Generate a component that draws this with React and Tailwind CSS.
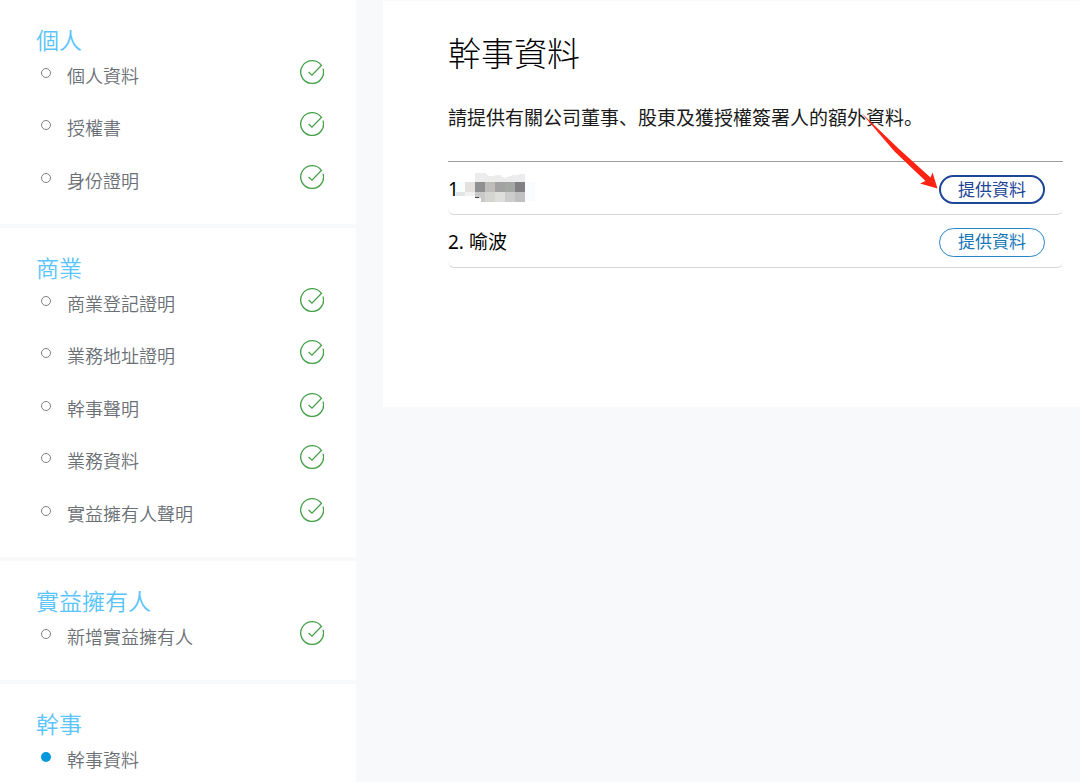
import React from "react";

const sections = [
  {
    title: "個人",
    items: [
      { label: "個人資料", done: true },
      { label: "授權書", done: true },
      { label: "身份證明", done: true },
    ],
  },
  {
    title: "商業",
    items: [
      { label: "商業登記證明", done: true },
      { label: "業務地址證明", done: true },
      { label: "幹事聲明", done: true },
      { label: "業務資料", done: true },
      { label: "實益擁有人聲明", done: true },
    ],
  },
  {
    title: "實益擁有人",
    items: [{ label: "新增實益擁有人", done: true }],
  },
  {
    title: "幹事",
    items: [{ label: "幹事資料", active: true }],
  },
];

function CheckIcon() {
  return (
    <svg viewBox="0 0 24 24" className="h-6 w-6 shrink-0" fill="none" stroke="#43a047" strokeWidth="1.3">
      <path d="M23 8.6A11.4 11.4 0 1 1 21.4 5.4L12 15.2L8.6 12" />
    </svg>
  );
}

// blurred-out name
function Mosaic() {
  return (
    <svg viewBox="0 0 80 30" className="mb-0.5 -ml-1 h-[30px] w-20" shapeRendering="crispEdges">
      <path d="M20 0H30L34 3L45 2L50 5L58 2L70 1V10H20Z" fill="#ececec" />
      <rect x="1" y="9" width="10" height="10" fill="#f8fdff" />
      <rect x="1" y="19" width="9" height="4" fill="#e0e4e6" />
      <rect x="10" y="9" width="10" height="10" fill="#e2e1de" />
      <rect x="10" y="19" width="10" height="4" fill="#f1f1ef" />
      <rect x="20" y="9" width="10" height="10" fill="#8e9092" />
      <rect x="30" y="9" width="10" height="10" fill="#bfbdb9" />
      <rect x="40" y="9" width="10" height="10" fill="#a2a2a3" />
      <rect x="50" y="9" width="10" height="10" fill="#a5a7a5" />
      <rect x="60" y="9" width="10" height="10" fill="#817e84" />
      <path d="M20 19H30V29H26V25H20Z" fill="#c9c9c9" />
      <rect x="20" y="24" width="4" height="1" fill="#444444" />
      <rect x="30" y="19" width="10" height="10" fill="#d4d4d1" />
      <rect x="40" y="19" width="10" height="10" fill="#dededd" />
      <rect x="50" y="19" width="10" height="10" fill="#cccccd" />
      <rect x="60" y="19" width="10" height="10" fill="#c0c0c1" />
      <rect x="70" y="9" width="10" height="19" fill="#fafbff" />
    </svg>
  );
}

function Arrow() {
  return (
    <svg viewBox="0 0 78 78" className="pointer-events-none absolute right-full bottom-1/2 h-[78px] w-[78px]">
      <path d="M0 1.5L38 38L69.5 66.5L71.5 61.5L76.5 77.5L59 72.5L64.5 70L33.5 40.5Z" fill="#ff2313" />
    </svg>
  );
}

function NavSection({ title, items }) {
  return (
    <section className="bg-white pt-7 pr-8 pb-[7px] pl-9">
      <h2 className="mb-2 text-[23px] leading-6 font-[350] text-[#5ac4fb]">{title}</h2>
      <ul>
        {items.map((item) => (
          <li key={item.label} className="flex h-[52px] items-start even:h-[53px]">
            <span
              className={
                item.active
                  ? "mt-2 ml-[5px] h-[10px] w-[10px] shrink-0 rounded-full bg-[#0099dd]"
                  : "mt-2 ml-[5px] h-[10px] w-[10px] shrink-0 rounded-full border border-[#808080]"
              }
            />
            <a href="#" className="mt-1 ml-4 grow text-lg leading-6 font-[350] text-[#6b7076]">
              {item.label}
            </a>
            {item.done && <CheckIcon />}
          </li>
        ))}
      </ul>
    </section>
  );
}

function App() {
  return (
    <div
      lang="zh-Hant"
      className="flex h-screen items-start gap-[27px] overflow-hidden bg-[#f8f9fb] font-['Noto_Sans','Noto_Sans_CJK_TC',sans-serif]"
    >
      <nav className="flex w-[356px] shrink-0 flex-col gap-1">
        {sections.map((section) => (
          <NavSection key={section.title} title={section.title} items={section.items} />
        ))}
      </nav>

      <main className="mt-px grow bg-white pt-8 pr-[17px] pb-[139px] pl-[65px]">
        <h1 className="text-[33px] leading-[42px] font-light text-black">幹事資料</h1>
        <p
          lang="zh-Hans"
          className="mt-[30px] font-['Noto_Sans_CJK_SC',sans-serif] text-[19px] leading-6 text-[#1a1a1a]"
        >
          請提供有關公司董事、股東及獲授權簽署人的額外資料。
        </p>
        <ol className="mt-8 border-t border-[#9c9c9c] text-[19px] text-black">
          <li className="flex h-[53px] items-center justify-between rounded-md border-b border-[#d6d6d6] pt-0.5 pr-[18px]">
            <span className="flex items-center">
              1
              <Mosaic />
            </span>
            <div className="relative h-[29px]">
              <Arrow />
              <button className="h-[29px] w-[106px] rounded-full border-2 border-[#1d4696] text-[17px] leading-6 text-[#1d4696]">
                提供資料
              </button>
            </div>
          </li>
          <li className="flex h-[53px] items-center justify-between rounded-md border-b border-[#d6d6d6] pt-0.5 pr-[18px]">
            <span>2. 喻波</span>
            <button className="h-[29px] w-[106px] rounded-full border border-[#2585c7] text-[17px] leading-6 text-[#1878b8]">
              提供資料
            </button>
          </li>
        </ol>
      </main>
    </div>
  );
}

export default App;
